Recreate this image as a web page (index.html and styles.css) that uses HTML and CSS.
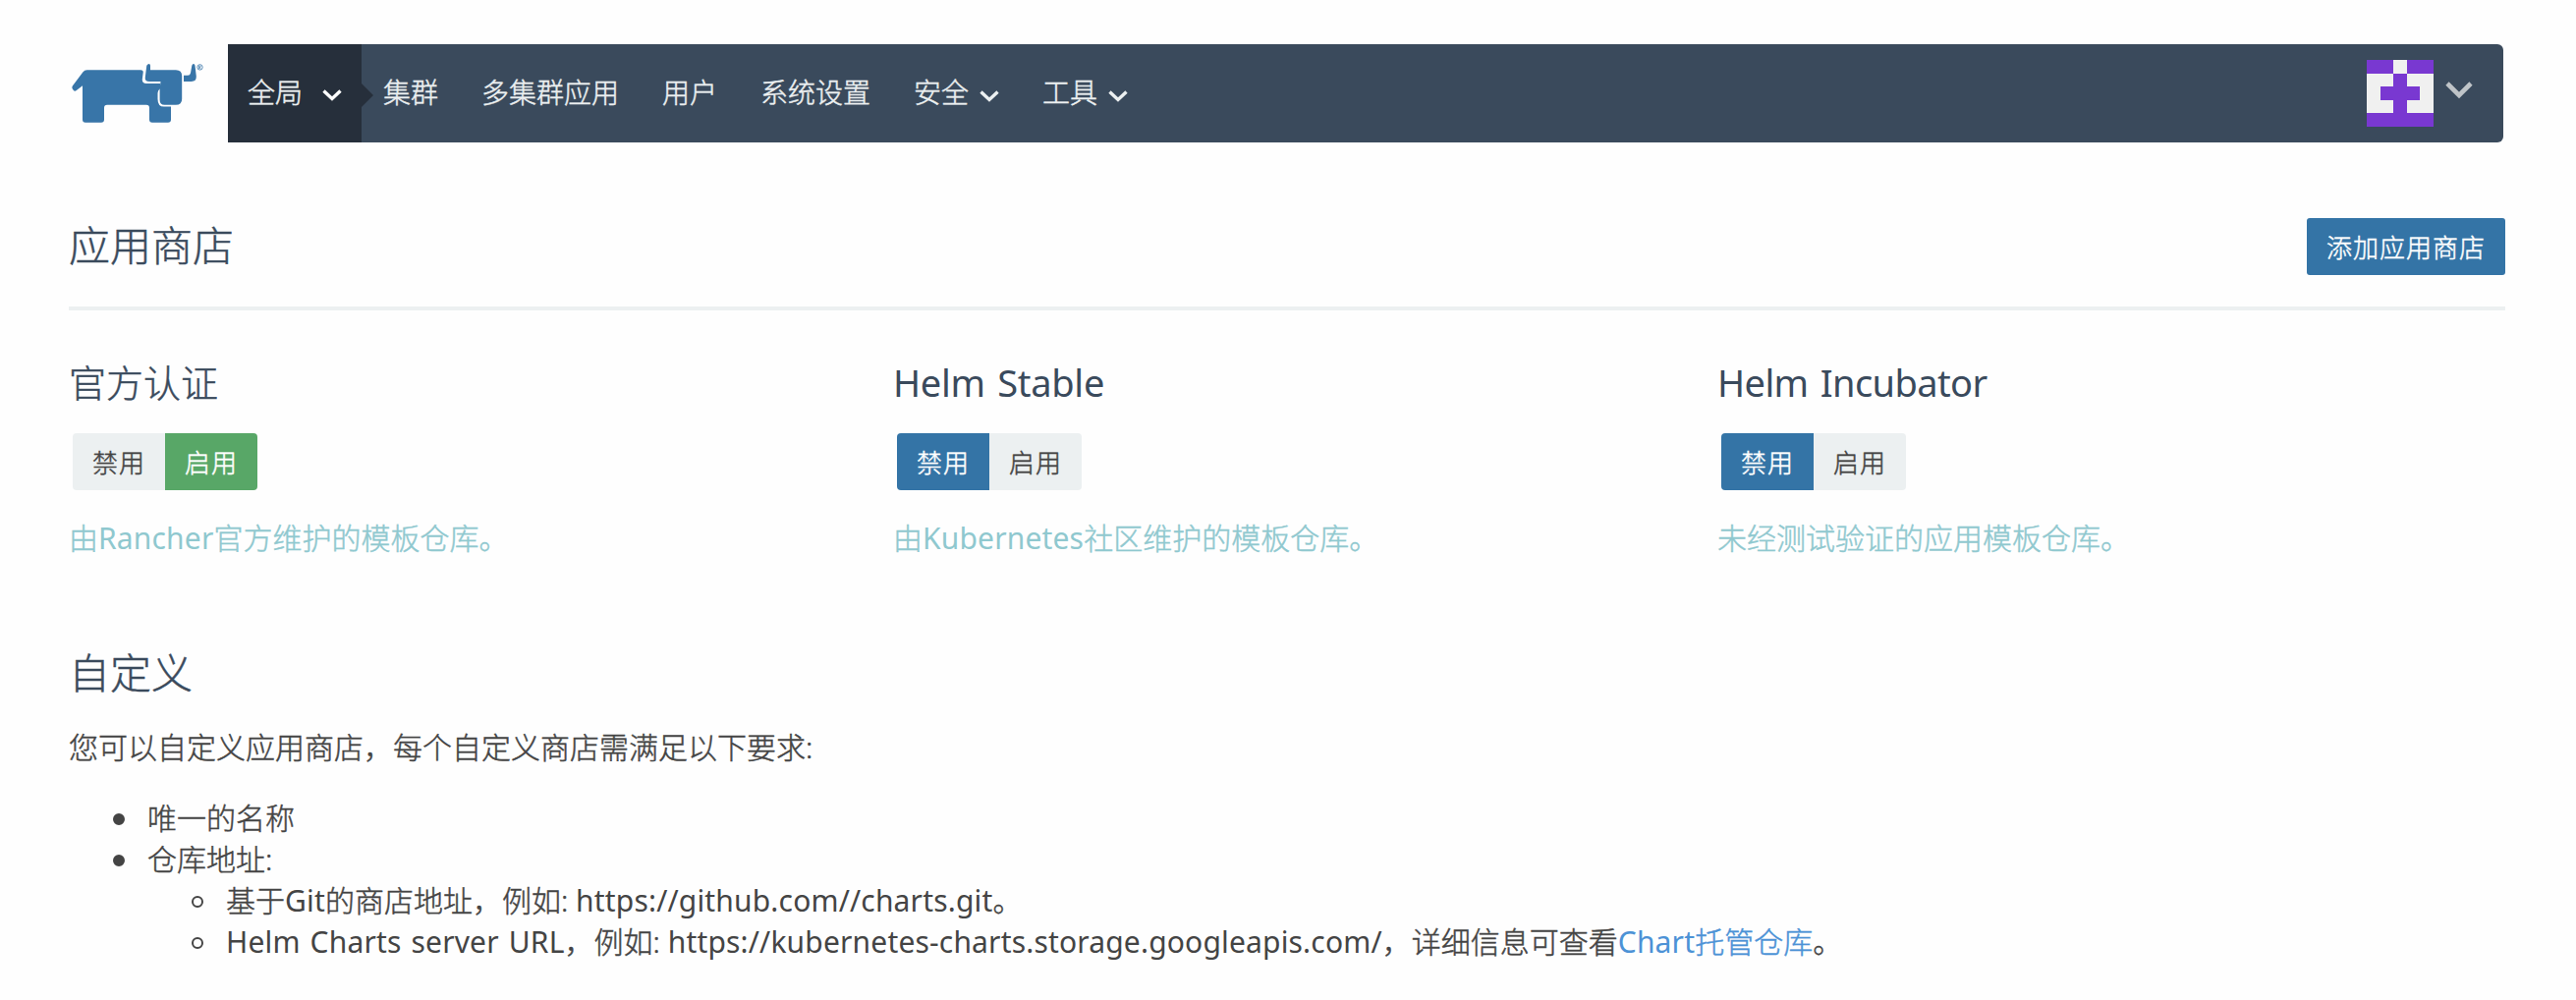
FILE: index.html
```
<!DOCTYPE html>
<html lang="zh-CN">
<head>
<meta charset="utf-8">
<title>应用商店</title>
<link rel="stylesheet" href="styles.css">
</head>
<body>
<header class="topbar">
  <svg class="logo" viewBox="0 -.7 140 66" width="140" height="66" role="img" aria-label="Rancher">
    <g fill="#3875a8">
      <path d="M15.500 7.500H70Q73 7.500 72.700 10L71.800 17Q71.500 21.200 76 21.200H90V26.500Q87.500 28 87.500 31V37Q87.500 44.900 94 44.900H101V58Q101 61 98 61H82Q79 61 79 58V46Q79 43 76 43H36Q33 43 33 46V58Q33 61 30 61H14Q11 61 11 58V23.500L4.800 28.300Q3 29.700 1.700 28L.8 26.700Q-.2 25.200 1 23.500L11.500 9.500Q13 7.500 15.500 7.500Z"/>
      <path d="M76.300 3Q77.300 1.200 78.800 1.200Q79.800 1.200 80 3V7.500H106Q112.200 7.500 112.200 13.500V37Q112.200 43 106 43H94.500Q89.600 43 89.600 38V26.500L90.500 19.300H79Q74.300 19.300 74.800 15Z"/>
      <path d="M114 13H118Q120.500 13 121 10.500L122.300 3Q122.800 1.200 124 1.200Q125.200 1.200 125.500 3L126.800 14Q127 19.200 121.800 19.200H114Z"/>
    </g>
    <path d="M88.500 20.200V25.500" stroke="#3875a8" stroke-width="0"/>
    <circle cx="130.500" cy="4.700" r="2.700" fill="none" stroke="#3875a8" stroke-width=".8"/>
    <path d="M129.600 6.500V3.300H130.800Q131.800 4.200 130.800 5H129.800L131.600 6.500" fill="none" stroke="#3875a8" stroke-width=".7"/>
  </svg>
  <nav class="nav">
    <a class="nav-item nav-active">全局<svg class="chev chev-wide" viewBox="0 0 20 12" width="20" height="12"><path d="M1.500 1.500L10 9.500L18.500 1.500"/></svg></a>
    <a class="nav-item">集群</a>
    <a class="nav-item">多集群应用</a>
    <a class="nav-item">用户</a>
    <a class="nav-item">系统设置</a>
    <a class="nav-item">安全<svg class="chev" viewBox="0 0 20 12" width="20" height="12"><path d="M1.500 1.500L10 9.500L18.500 1.500"/></svg></a>
    <a class="nav-item">工具<svg class="chev" viewBox="0 0 20 12" width="20" height="12"><path d="M1.500 1.500L10 9.500L18.500 1.500"/></svg></a>
    <div class="user">
      <svg viewBox="0 0 5 5" width="68" height="68" shape-rendering="crispEdges">
        <path fill="#f0f0f0" d="M0 0H5V5H0Z"/>
        <path fill="#7938d1" d="M0 0H2V1H0ZM3 0H5V1H3ZM2 1H3V2H4V3H3V4H5V5H0V4H2V3H1V2H2Z"/>
      </svg>
      <svg class="user-chev" viewBox="0 0 28 18" width="28" height="18"><path d="M2 2L14 14L26 2"/></svg>
    </div>
  </nav>
</header>
<main class="page">
  <div class="page-head">
    <h1 class="title">应用商店</h1>
    <button class="btn primary">添加应用商店</button>
  </div>
  <section class="catalogs">
    <div class="catalog">
      <h2 class="name">官方认证</h2>
      <div class="toggle"><button class="btn">禁用</button><button class="btn success">启用</button></div>
      <p class="desc">由<span class="latin">Rancher</span>官方维护的模板仓库。</p>
    </div>
    <div class="catalog">
      <h2 class="name"><span class="latin">Helm Stable</span></h2>
      <div class="toggle"><button class="btn primary">禁用</button><button class="btn">启用</button></div>
      <p class="desc">由<span class="latin">Kubernetes</span>社区维护的模板仓库。</p>
    </div>
    <div class="catalog">
      <h2 class="name"><span class="latin tight">Helm Incubator</span></h2>
      <div class="toggle"><button class="btn primary">禁用</button><button class="btn">启用</button></div>
      <p class="desc">未经测试验证的应用模板仓库。</p>
    </div>
  </section>
  <section class="custom">
    <h1 class="title">自定义</h1>
    <p class="intro">您可以自定义应用商店，每个自定义商店需满足以下要求:</p>
    <ul class="list">
      <li>唯一的名称</li>
      <li>仓库地址:
        <ul class="list sub">
          <li>基于<span class="latin">Git</span>的商店地址，例如: <span class="latin">https://github.com//charts.git</span>。</li>
          <li><span class="latin">Helm Charts server URL</span>，例如: <span class="latin">https://kubernetes-charts.storage.googleapis.com/</span>，详细信息可查看<a class="link"><span class="latin">Chart</span>托管仓库</a>。</li>
        </ul>
      </li>
    </ul>
  </section>
</main>
</body>
</html>
```
FILE: styles.css
```
*, *::before { box-sizing: border-box; }
body {
  margin: 0;
  padding: 45px 72px 0 70px;
  background: #fefefe;
  color: #444;
  font: 300 30px/42px "Noto Sans", "Noto Sans CJK SC", sans-serif;
  -webkit-text-stroke: .45px;
}
h1, h2, p, ul { margin: 0; padding: 0; font-weight: 300; }
svg { flex: none; }
.latin {
  font-weight: 400;
  letter-spacing: .17px;
  word-spacing: 2px;
  -webkit-text-stroke: 0;
}
.name .latin { letter-spacing: -.3px; word-spacing: 3px; }
.name .tight { letter-spacing: -.6px; }
.topbar { display: flex; height: 100px; padding-right: 2px; }
.logo { width: 140px; margin: 18px 19px 0 3px; }
.nav {
  flex: 1;
  display: flex;
  background: #3a4a5c;
  border-radius: 0 6px 6px 0;
  color: #ecf0f1;
  font-size: 28px;
}
.nav-item { display: flex; align-items: center; padding: 0 22px 3px; }
.nav-active { position: relative; width: 136px; padding: 0 20px 3px; background: #262f3b; }
.nav-active::after {
  content: "";
  position: absolute;
  left: 100%;
  top: 40px;
  border: 12px solid transparent;
  border-left-color: #262f3b;
  border-right-width: 0;
}
.chev { margin: 8px 0 0 11px; fill: none; stroke: #ecf0f1; stroke-width: 3.4; }
.chev-wide { margin: 6px 0 0 20px; stroke: #fff; }
.user { display: flex; align-items: center; margin-left: auto; padding-right: 31px; gap: 12px; }
.user-chev { margin-top: -6px; fill: none; stroke: #bfc4c8; stroke-width: 4.6; }
.page-head {
  display: flex;
  justify-content: space-between;
  align-items: center;
  height: 131px;
  margin-top: 40px;
  padding-top: 5px;
  border-bottom: 4px solid #ecf0f1;
}
.title { color: #3a4a5c; font-size: 42px; line-height: 60px; }
.page-head .title { padding-bottom: 2px; }
.btn {
  height: 58px;
  padding: 2px 20px 0;
  border: 0;
  border-radius: 3px;
  background: #ecf0f1;
  color: #444;
  font: inherit;
  font-size: 26px;
  letter-spacing: 1px;
}
.primary { background: #3474a6; color: #fff; }
.success { background: #58a767; color: #fff; }
.catalogs { display: grid; grid-template-columns: 839px 839px 1fr; padding-top: 48px; }
.name { color: #3a4a5c; font-size: 38px; line-height: 50px; }
.toggle { display: flex; margin: 27px 0 28px 4px; }
.toggle .btn { width: 94px; }
.toggle .btn:first-child { border-radius: 4px 0 0 4px; }
.toggle .btn:last-child { border-radius: 0 4px 4px 0; }
.desc { color: #8fc8cf; }
.custom { padding-top: 86px; }
.intro { margin: 25px 0 30px; }
.list { padding-left: 80px; list-style: none; }
.list li::before {
  content: "";
  display: inline-block;
  width: 12px;
  height: 12px;
  margin: 0 23px 4px -35px;
  border: 2px solid #444;
  border-radius: 50%;
  background: #444;
}
.list .sub li::before { background: none; }
.link { color: #4c92d6; }
```
